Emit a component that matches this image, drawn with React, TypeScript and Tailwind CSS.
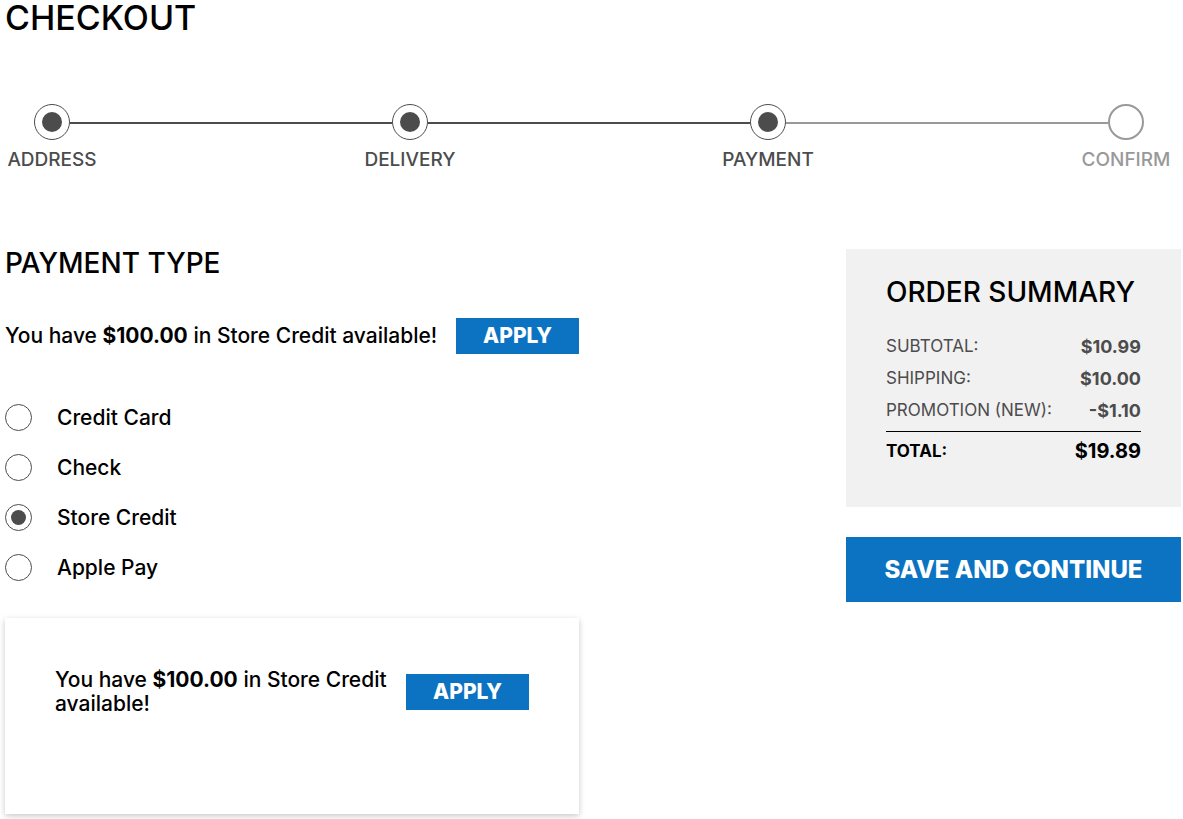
import { useState } from "react";

const steps = [
  { name: "Address", reached: true, lineDone: true },
  { name: "Delivery", reached: true, lineDone: true },
  { name: "Payment", reached: true, lineDone: false },
  { name: "Confirm", reached: false, lineDone: false },
];

const methods = ["Credit Card", "Check", "Store Credit", "Apple Pay"];

const charges = [
  { label: "Subtotal:", amount: "$10.99" },
  { label: "Shipping:", amount: "$10.00" },
  { label: "Promotion (new):", amount: "-$1.10" },
];

function Stepper() {
  return (
    <ol className="mt-[68px] flex pr-2">
      {steps.map((step, i) => {
        const last = i === steps.length - 1;
        return (
          <li
            key={step.name}
            className={last ? "w-[94px] shrink-0" : "min-w-0 flex-1"}
          >
            <div className="flex items-center pl-[29px]">
              <span
                className={
                  step.reached
                    ? "flex size-9 shrink-0 items-center justify-center rounded-full border border-[#4c4c4c]"
                    : "flex size-9 shrink-0 rounded-full border-2 border-[#999999]"
                }
              >
                {step.reached && (
                  <span className="size-5 rounded-full bg-[#4c4c4c]" />
                )}
              </span>
              {!last && (
                <span
                  className={
                    step.lineDone
                      ? "-mr-[29px] mt-0.5 h-0.5 flex-1 bg-[#4c4c4c]"
                      : "-mr-[29px] mt-0.5 h-0.5 flex-1 bg-[#999999]"
                  }
                />
              )}
            </div>
            <div
              className={
                step.reached
                  ? "mt-2 flex w-[94px] justify-center text-[19px] leading-6 uppercase text-[#4c4c4c]"
                  : "mt-2 flex w-[94px] justify-center text-[19px] leading-6 uppercase text-[#999999]"
              }
            >
              {step.name}
            </div>
          </li>
        );
      })}
    </ol>
  );
}

function StoreCredit() {
  return (
    <div className="flex items-center">
      <p className="flex-1 text-[21px] leading-6">
        You have <strong className="font-bold">$100.00</strong> in Store Credit
        available!
      </p>
      <button
        type="button"
        className="h-9 w-[123px] shrink-0 bg-[#0b73c2] text-[21px] font-extrabold uppercase text-white"
      >
        Apply
      </button>
    </div>
  );
}

export default function App() {
  const [method, setMethod] = useState("Store Credit");

  return (
    <main className="bg-white pr-0.5 pb-[5px] pl-[5px] font-['Inter','Noto_Sans',sans-serif] font-medium text-black">
      <h1 className="text-[34px] leading-9">CHECKOUT</h1>
      <Stepper />

      <div className="mt-[77px] flex items-start justify-between gap-8">
        <section className="w-full max-w-[574px]">
          <h2 className="text-[28px] leading-7">PAYMENT TYPE</h2>
          <div className="mt-[41px]">
            <StoreCredit />
          </div>

          <fieldset aria-label="Payment type" className="mt-[39px]">
            {methods.map((m) => (
              <label
                key={m}
                className="flex h-[50px] items-center gap-[25px] pb-px"
              >
                <input
                  type="radio"
                  name="method"
                  value={m}
                  checked={method === m}
                  onChange={() => setMethod(m)}
                  className="flex size-[27px] shrink-0 appearance-none items-center justify-center rounded-full border border-[#4c4c4c] checked:before:size-[15px] checked:before:rounded-full checked:before:bg-[#4c4c4c] checked:before:content-['']"
                />
                <span className="text-[21px] leading-6">{m}</span>
              </label>
            ))}
          </fieldset>

          <div className="mt-[25px] min-h-[196px] p-[50px] shadow-[0_2px_6px_rgba(0,0,0,0.22)]">
            <StoreCredit />
          </div>
        </section>

        <aside className="w-[335px] shrink-0">
          <div className="bg-[#f1f1f1] px-10 pt-[29px] pb-9">
            <h2 className="text-[28px] leading-7 whitespace-nowrap">
              ORDER SUMMARY
            </h2>
            <table className="mt-[25px] w-full uppercase">
              <tbody className="text-[#4c4c4c] [&>tr:last-child]:h-9 [&>tr:last-child>*]:pb-1">
                {charges.map((c) => (
                  <tr key={c.label} className="h-8">
                    <th scope="row" className="text-left text-[17px] font-normal">
                      {c.label}
                    </th>
                    <td className="text-right text-lg font-bold">{c.amount}</td>
                  </tr>
                ))}
              </tbody>
              <tfoot>
                <tr className="h-10 border-t border-black">
                  <th scope="row" className="text-left text-[17px] font-bold">
                    Total:
                  </th>
                  <td className="text-right text-xl font-bold">$19.89</td>
                </tr>
              </tfoot>
            </table>
          </div>
          <button
            type="button"
            className="mt-[30px] h-[65px] w-full bg-[#0b73c2] text-2xl font-extrabold uppercase text-white"
          >
            Save and continue
          </button>
        </aside>
      </div>
    </main>
  );
}
